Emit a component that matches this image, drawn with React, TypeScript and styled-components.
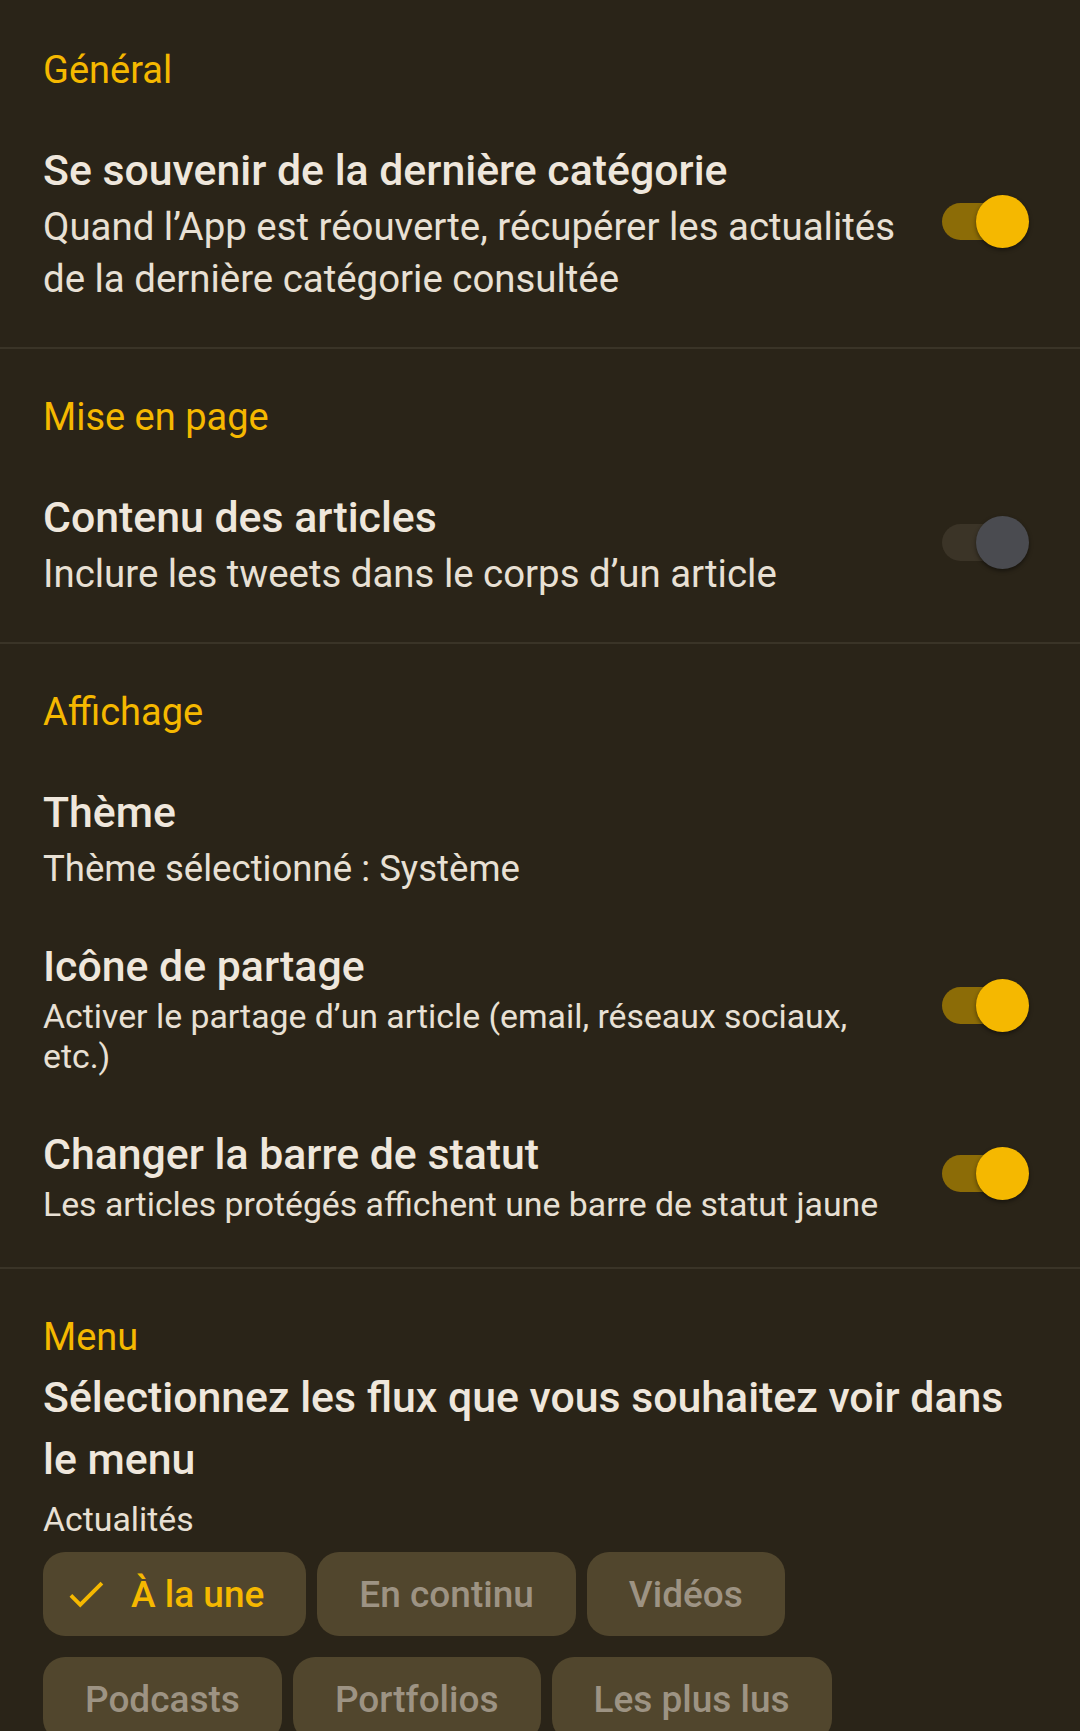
import React from "react";
import styled, { createGlobalStyle } from "styled-components";

const GlobalStyle = createGlobalStyle`
  html, body {
    margin: 0;
    padding: 0;
    background: #2a2418;
  }
  body {
    font-family: Roboto, "Noto Sans", "Liberation Sans", sans-serif;
    overflow: hidden;
  }
  * { box-sizing: border-box; }
`;

const Page = styled.div`
  width: 1080px;
  height: 1731px;
  background: #2a2418;
  overflow: hidden;
  display: flex;
  flex-direction: column;
`;

const Section = styled.section<{ $last?: boolean }>`
  display: flex;
  flex-direction: column;
  padding: 42px 43px ${(p) => (p.$last ? "0" : "19px")} 43px;
  border-bottom: ${(p) => (p.$last ? "none" : "2px solid #3a3427")};
  &:first-child {
    padding-top: 44px;
  }
`;

const SectionHeader = styled.div<{ $tight?: boolean }>`
  font-size: 38px;
  line-height: 52px;
  color: #f5b800;
  font-weight: 400;
  margin-bottom: ${(p) => (p.$tight ? "0" : "23px")};
`;

const Item = styled.div<{ $raised?: boolean }>`
  display: flex;
  align-items: center;
  gap: 40px;
  padding: ${(p) => (p.$raised ? "20px 0 26px" : "23px 0")};
`;

const ItemText = styled.div`
  flex: 1;
  display: flex;
  flex-direction: column;
  min-width: 0;
`;

const Title = styled.div`
  font-size: 42.8px;
  line-height: 56px;
  font-weight: 500;
  color: #efe7dc;
  margin-bottom: 3px;
`;

const Subtitle = styled.div<{ $size?: "small" | "medium" }>`
  font-size: ${(p) =>
    p.$size === "small" ? "33.8px" : p.$size === "medium" ? "36.6px" : "38.4px"};
  line-height: ${(p) => (p.$size === "small" ? "40px" : "52px")};
  color: #e8e0d4;
  font-weight: 400;
`;

const Switch = styled.div`
  position: relative;
  width: 87px;
  height: 53px;
  flex-shrink: 0;
  margin-right: 8px;
  margin-bottom: 5px;
`;

const Track = styled.div<{ $on: boolean }>`
  position: absolute;
  left: 0;
  top: 8px;
  width: 78px;
  height: 37px;
  border-radius: 19px;
  background: ${(p) => (p.$on ? "#8c6c07" : "#3b3427")};
`;

const Thumb = styled.div<{ $on: boolean }>`
  position: absolute;
  right: 0;
  top: 0;
  width: 53px;
  height: 53px;
  border-radius: 50%;
  background: ${(p) => (p.$on ? "#f5b800" : "#4a4b50")};
  box-shadow: 0 2px 4px rgba(0, 0, 0, 0.45);
`;

const MenuTitle = styled.div`
  font-size: 42.8px;
  line-height: 62px;
  font-weight: 500;
  color: #efe7dc;
  margin-top: 3px;
`;

const GroupLabel = styled.div`
  font-size: 33.8px;
  line-height: 44px;
  color: #e8e0d4;
  margin-top: 8px;
  margin-bottom: 10px;
`;

const ChipGroup = styled.div`
  display: flex;
  flex-direction: column;
  gap: 21px;
`;

const ChipRow = styled.div`
  display: flex;
  gap: 11px;
`;

const Chip = styled.div<{ $selected?: boolean }>`
  display: flex;
  align-items: center;
  gap: 22px;
  height: 84px;
  padding: ${(p) => (p.$selected ? "0 42px 0 20px" : "0 42px")};
  border-radius: 22px;
  background: #51462d;
  color: ${(p) => (p.$selected ? "#f5b800" : "#9d9383")};
  font-size: 37px;
  font-weight: 500;
  white-space: nowrap;
`;

const CheckIcon = () => (
  <svg width="46" height="46" viewBox="0 0 24 24" fill="#f5b800">
    <path d="M9 16.17L4.83 12l-1.42 1.41L9 19 21 7l-1.41-1.41z" />
  </svg>
);

const Toggle = ({ on }: { on: boolean }) => (
  <Switch>
    <Track $on={on} />
    <Thumb $on={on} />
  </Switch>
);

type ChipData = { label: string; selected?: boolean };

const chipRows: ChipData[][] = [
  [{ label: "À la une", selected: true }, { label: "En continu" }, { label: "Vidéos" }],
  [{ label: "Podcasts" }, { label: "Portfolios" }, { label: "Les plus lus" }],
];

export default function App() {
  return (
    <>
      <GlobalStyle />
      <Page>
        <Section>
          <SectionHeader>Général</SectionHeader>
          <Item>
            <ItemText>
              <Title>Se souvenir de la dernière catégorie</Title>
              <Subtitle>
                Quand l’App est réouverte, récupérer les actualités de la dernière catégorie consultée
              </Subtitle>
            </ItemText>
            <Toggle on />
          </Item>
        </Section>
        <Section>
          <SectionHeader>Mise en page</SectionHeader>
          <Item>
            <ItemText>
              <Title>Contenu des articles</Title>
              <Subtitle>Inclure les tweets dans le corps d’un article</Subtitle>
            </ItemText>
            <Toggle on={false} />
          </Item>
        </Section>
        <Section>
          <SectionHeader>Affichage</SectionHeader>
          <Item>
            <ItemText>
              <Title>Thème</Title>
              <Subtitle $size="medium">Thème sélectionné : Système</Subtitle>
            </ItemText>
          </Item>
          <Item $raised>
            <ItemText>
              <Title>Icône de partage</Title>
              <Subtitle $size="small">
                Activer le partage d’un article (email, réseaux sociaux, etc.)
              </Subtitle>
            </ItemText>
            <Toggle on />
          </Item>
          <Item>
            <ItemText>
              <Title>Changer la barre de statut</Title>
              <Subtitle $size="small">
                Les articles protégés affichent une barre de statut jaune
              </Subtitle>
            </ItemText>
            <Toggle on />
          </Item>
        </Section>
        <Section $last>
          <SectionHeader $tight>Menu</SectionHeader>
          <MenuTitle>Sélectionnez les flux que vous souhaitez voir dans le menu</MenuTitle>
          <GroupLabel>Actualités</GroupLabel>
          <ChipGroup>
            {chipRows.map((row, i) => (
              <ChipRow key={i}>
                {row.map((c) => (
                  <Chip key={c.label} $selected={c.selected}>
                    {c.selected && <CheckIcon />}
                    {c.label}
                  </Chip>
                ))}
              </ChipRow>
            ))}
          </ChipGroup>
        </Section>
      </Page>
    </>
  );
}
